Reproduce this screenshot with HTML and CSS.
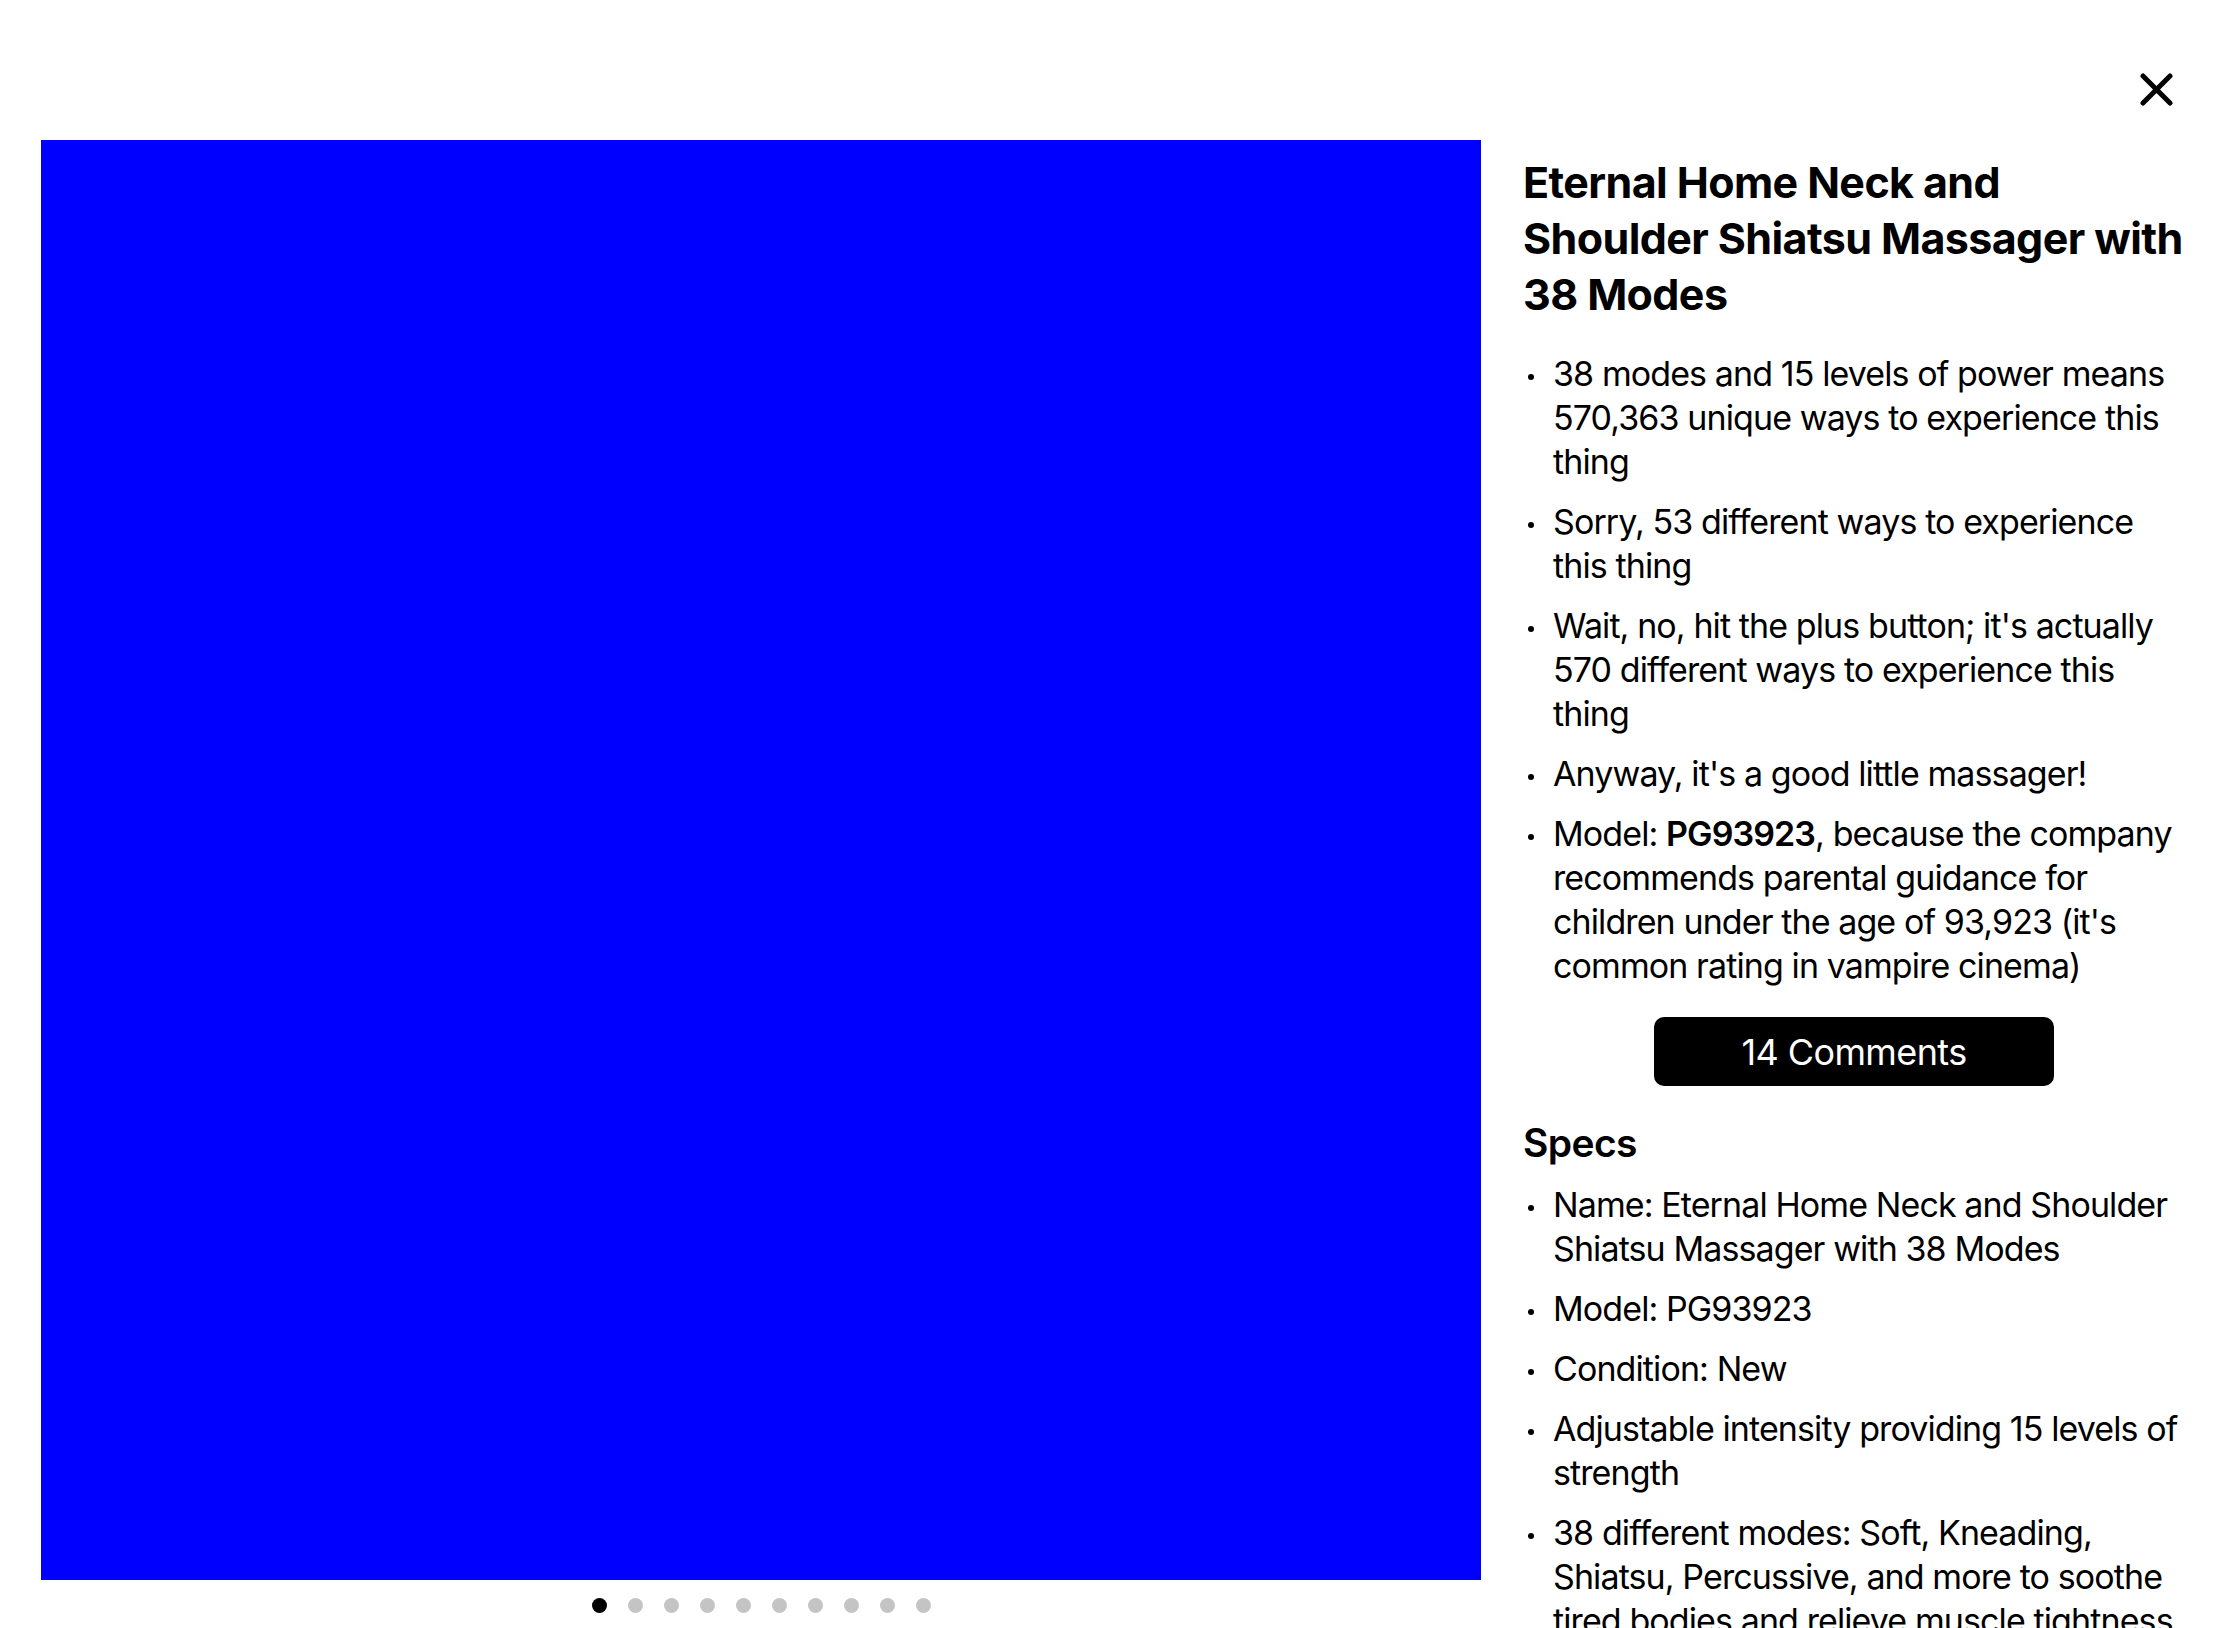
FILE: index.html
```html
<!DOCTYPE html>
<html lang="en">
<head>
<meta charset="utf-8">
<title>Eternal Home Neck and Shoulder Shiatsu Massager</title>
<link rel="stylesheet" href="styles.css">
</head>
<body>
<div class="page">
  <header class="topbar">
    <button class="close" aria-label="Close">
      <svg width="33" height="33" viewBox="0 0 33 33"><path d="M3 3 L30 30 M30 3 L3 30" stroke="#000" stroke-width="5" stroke-linecap="round" fill="none"/></svg>
    </button>
  </header>
  <main class="main">
    <section class="gallery">
      <div class="photo"></div>
      <div class="dots">
        <span class="dot active"></span>
        <span class="dot"></span>
        <span class="dot"></span>
        <span class="dot"></span>
        <span class="dot"></span>
        <span class="dot"></span>
        <span class="dot"></span>
        <span class="dot"></span>
        <span class="dot"></span>
        <span class="dot"></span>
      </div>
    </section>
    <section class="info">
      <h1 class="title">Eternal Home Neck and Shoulder Shiatsu Massager with 38 Modes</h1>
      <ul class="bullets">
        <li><span class="txt">38 modes and 15 levels of power means 570,363 unique ways to experience this thing</span></li>
        <li><span class="txt">Sorry, 53 different ways to experience this thing</span></li>
        <li><span class="txt">Wait, no, hit the plus button; it's actually 570 different ways to experience this thing</span></li>
        <li><span class="txt">Anyway, it's a good little massager!</span></li>
        <li><span class="txt">Model: <b>PG93923</b>, because the company recommends parental guidance for children under the age of 93,923 (it's common rating in vampire cinema)</span></li>
      </ul>
      <button class="comments">14 Comments</button>
      <h2 class="specs-title">Specs</h2>
      <ul class="bullets specs">
        <li><span class="txt">Name: Eternal Home Neck and Shoulder Shiatsu Massager with 38 Modes</span></li>
        <li><span class="txt">Model: PG93923</span></li>
        <li><span class="txt">Condition: New</span></li>
        <li><span class="txt">Adjustable intensity providing 15 levels of strength</span></li>
        <li><span class="txt">38 different modes: Soft, Kneading, Shiatsu, Percussive, and more to soothe tired bodies and relieve muscle tightness</span></li>
      </ul>
    </section>
  </main>
</div>
</body>
</html>
```
FILE: styles.css
```css
* { box-sizing: border-box; }
html, body {
  margin: 0;
  padding: 0;
  background: #fff;
}
body {
  font-family: Inter, "Noto Sans", "Liberation Sans", sans-serif;
  color: #000;
}
.page {
  width: 2224px;
  height: 1628px;
  overflow: hidden;
  display: flex;
  flex-direction: column;
}
.topbar {
  height: 140px;
  flex: none;
  display: flex;
  justify-content: flex-end;
  align-items: flex-start;
  padding: 73px 51px 0 0;
}
.close {
  border: 0;
  background: none;
  padding: 0;
  margin: 0;
  width: 33px;
  height: 33px;
  display: block;
  cursor: pointer;
}
.close svg { display: block; }
.main {
  display: flex;
  align-items: flex-start;
  padding-left: 41px;
  gap: 42px;
}
.gallery {
  flex: none;
  width: 1440px;
  display: flex;
  flex-direction: column;
  align-items: center;
}
.photo {
  width: 1440px;
  height: 1440px;
  background: #0000ff;
}
.dots {
  display: flex;
  gap: 21px;
  margin-top: 18px;
}
.dot {
  width: 15px;
  height: 15px;
  border-radius: 50%;
  background: #c4c4c4;
}
.dot.active { background: #000; }
.info {
  flex: none;
  width: 662px;
  padding-top: 14px;
  display: flex;
  flex-direction: column;
}
.title {
  margin: 0;
  font-size: 43px;
  line-height: 56px;
  font-weight: 700;
  letter-spacing: -0.6px;
}
.bullets {
  list-style: none;
  margin: 30px 0 0;
  padding: 0;
  display: flex;
  flex-direction: column;
  gap: 16px;
}
.bullets li {
  display: grid;
  grid-template-columns: 30px 1fr;
  font-size: 34px;
  line-height: 44px;
  letter-spacing: -0.9px;
}
.bullets li::before {
  content: "";
  width: 6px;
  height: 6px;
  border-radius: 50%;
  background: #000;
  margin: 22px 0 0 5px;
}
.bullets b { font-weight: 600; }
.comments {
  align-self: center;
  margin-top: 29px;
  width: 400px;
  height: 69px;
  border: 0;
  border-radius: 10px;
  background: #000;
  color: #fff;
  font-family: inherit;
  font-size: 36px;
  letter-spacing: -0.6px;
  padding: 0;
}
.specs-title {
  margin: 33px 0 0;
  font-size: 39px;
  line-height: 48px;
  font-weight: 600;
  letter-spacing: -0.6px;
}
.bullets.specs { margin-top: 16px; }
```
